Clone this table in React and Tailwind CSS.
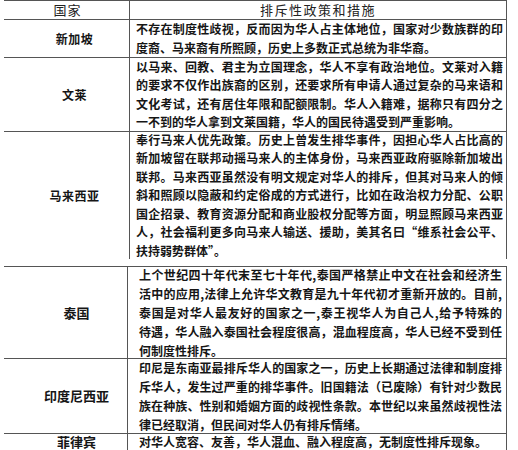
const font = {
  fontFamily: '"Noto Sans CJK SC", "Noto Sans", sans-serif',
};

const upperRows = [
  {
    name: "新加坡",
    h: "h-[38px]",
    lines: [
      "不存在制度性歧视，反而因为华人占主体地位，国家对少数族群的印",
      "度裔、马来裔有所照顾，历史上多数正式总统为非华裔。",
    ],
  },
  {
    name: "文莱",
    h: "h-[74px]",
    lines: [
      "以马来、回教、君主为立国理念，华人不享有政治地位。文莱对入籍",
      "的要求不仅作出族裔的区别，还要求所有申请人通过复杂的马来语和",
      "文化考试，还有居住年限和配额限制。华人入籍难，据称只有四分之",
      "一不到的华人拿到文莱国籍，华人的国民待遇受到严重影响。",
    ],
  },
  {
    name: "马来西亚",
    h: "h-[127px]",
    last: true,
    lines: [
      "奉行马来人优先政策。历史上曾发生排华事件，因担心华人占比高的",
      "新加坡留在联邦动摇马来人的主体身份，马来西亚政府驱除新加坡出",
      "联邦。马来西亚虽然没有明文规定对华人的排斥，但其对马来人的倾",
      "斜和照顾以隐蔽和约定俗成的方式进行，比如在政治权力分配、公职",
      "国企招录、教育资源分配和商业股权分配等方面，明显照顾马来西亚",
      "人，社会福利更多向马来人输送、援助，美其名曰“维系社会公平、",
      "扶持弱势群体”。",
    ],
  },
];

const lowerRows = [
  {
    name: "泰国",
    h: "h-[92px]",
    lines: [
      "上个世纪四十年代末至七十年代,泰国严格禁止中文在社会和经济生",
      "活中的应用,法律上允许华文教育是九十年代初才重新开放的。目前,",
      "泰国是对华人最友好的国家之一,泰王视华人为自己人,给予特殊的",
      "待遇，华人融入泰国社会程度很高，混血程度高，华人已经不受到任",
      "何制度性排斥。",
    ],
  },
  {
    name: "印度尼西亚",
    h: "h-[75px]",
    lines: [
      "印尼是东南亚最排斥华人的国家之一，历史上长期通过法律和制度排",
      "斥华人，发生过严重的排华事件。旧国籍法（已废除）有针对少数民",
      "族在种族、性别和婚姻方面的歧视性条款。本世纪以来虽然歧视性法",
      "律已经取消，但民间对华人仍有排斥情绪。",
    ],
  },
  {
    name: "菲律宾",
    h: "h-[16px]",
    last: true,
    lines: ["对华人宽容、友善，华人混血、融入程度高，无制度性排斥现象。"],
  },
];

// each line is set on its own so the breaks match the scan
const Lines = ({ lines, leading }) => (
  <div className={leading}>
    {lines.map((l, i) => (
      <div
        key={i}
        className={
          i < lines.length - 1
            ? "text-justify [text-align-last:justify]"
            : "text-left"
        }
      >
        {l}
      </div>
    ))}
  </div>
);

export default function App() {
  return (
    <div className="w-[518px] h-[450px] bg-white overflow-hidden text-[#161616]" style={font}>
      {/* upper part of the table */}
      <div className="ml-[4px] w-[503px] border-t border-r border-[#555]">
        <div className="flex h-[19px] border-b border-[#555] text-[13px] leading-[18px] text-[#222]">
          <div className="w-[126px] border-r border-[#555] pl-[2px] text-center tracking-[1px]">
            国家
          </div>
          <div className="flex-1 text-center tracking-[1.5px]">排斥性政策和措施</div>
        </div>
        {upperRows.map((r) => (
          <div
            key={r.name}
            className={`flex ${r.h} ${r.last ? "" : "border-b border-[#555]"}`}
          >
            <div className="w-[126px] border-r border-[#555] flex items-center justify-center pl-[16px] text-[12px] font-semibold tracking-[0.5px]">
              {r.name}
            </div>
            <div className="flex-1 flex items-center pl-[6px] pr-[3px] text-[12px] font-semibold">
              <div className="w-full">
                <Lines lines={r.lines} leading="leading-[18.4px]" />
              </div>
            </div>
          </div>
        ))}
      </div>

      <div className="h-[7px]" />

      {/* lower part, pasted from another scan */}
      <div className="ml-[4px] w-[503px] border-t border-r border-[#555]">
        {lowerRows.map((r) => (
          <div
            key={r.name}
            className={`flex ${r.h} ${r.last ? "" : "border-b border-[#555]"}`}
          >
            <div
              className={`w-[124px] border-r border-[#555] flex justify-center pl-[22px] text-[13px] font-bold ${
                r.last ? "items-start leading-[16px]" : "items-center"
              }`}
            >
              {r.name}
            </div>
            <div
              className={`flex-1 flex pl-[11px] pr-[4px] text-[12px] font-bold ${
                r.last ? "items-start" : "items-center"
              }`}
            >
              <div className="w-full">
                <Lines lines={r.lines} leading={r.last ? "leading-[16px]" : "leading-[19px]"} />
              </div>
            </div>
          </div>
        ))}
      </div>
    </div>
  );
}
